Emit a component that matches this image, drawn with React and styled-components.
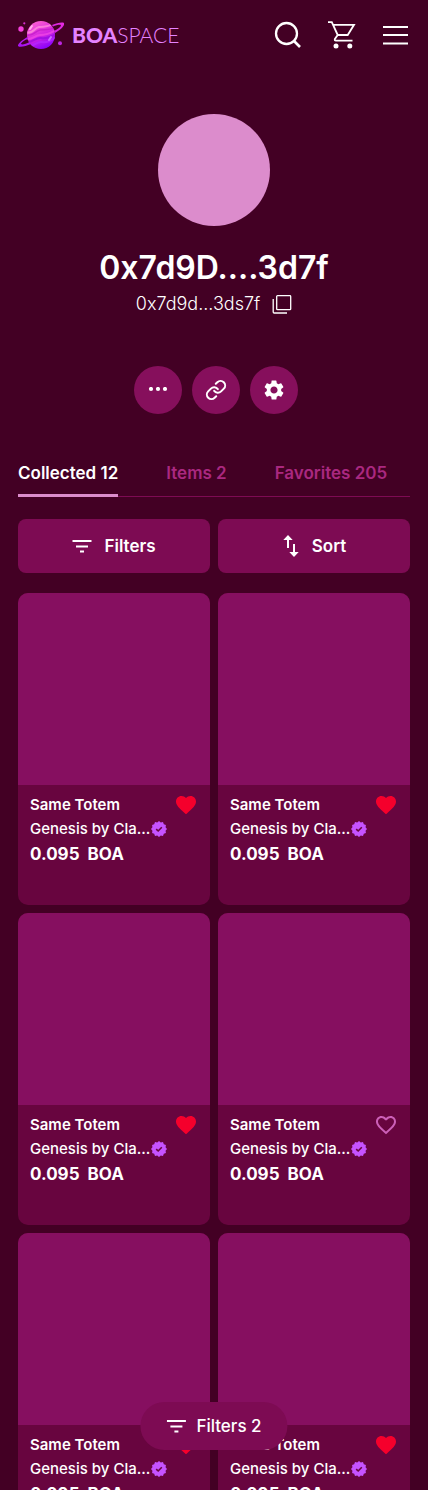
import React, { useState } from "react";
import styled, { createGlobalStyle, css } from "styled-components";
import { MdSettings, MdFavorite, MdFavoriteBorder } from "react-icons/md";

const color = {
  page: "#430024",
  card: "#68053f",
  media: "#860f60",
  round: "#860f5c",
  button: "#7d0b53",
  line: "#7d0b53",
  muted: "#aa2880",
  accent: "#dc8ccc",
  text: "#ffffff",
  like: "#f5002c",
  badge: "#c653ff",
};

const GlobalStyle = createGlobalStyle`
  *, *::before, *::after { box-sizing: border-box; }
  html, body { margin: 0; background: ${color.page}; }
  body {
    color: ${color.text};
    font-family: Inter, "Liberation Sans", sans-serif;
    font-size: 16px;
  }
  svg { display: block; flex: none; }
`;

const buttonReset = css`
  border: 0;
  padding: 0;
  background: none;
  color: inherit;
  font: inherit;
  cursor: pointer;
`;

const Page = styled.div`
  height: 100vh;
  overflow-y: auto;
  scrollbar-width: none;
`;

const Header = styled.header`
  display: flex;
  align-items: center;
  justify-content: space-between;
  height: 70px;
  padding: 0 18px;
`;

const Brand = styled.a`
  display: flex;
  align-items: center;
  gap: 8px;
  color: #e583ff;
  text-decoration: none;
  font-family: Lato, "Liberation Sans", sans-serif;
  font-size: 21px;
  font-weight: 300;
  line-height: 28px;

  b { font-weight: 900; }
`;

const HeaderActions = styled.nav`
  display: flex;
  align-items: center;
  gap: 26px;
`;

const IconButton = styled.button`
  ${buttonReset}
`;

const Profile = styled.section`
  display: flex;
  flex-direction: column;
  align-items: center;
  padding: 44px 18px 0;
`;

const Avatar = styled.div`
  width: 112px;
  height: 112px;
  border-radius: 50%;
  background: ${color.accent};
`;

const Name = styled.h1`
  margin: 20px 0 0;
  font-size: 32px;
  font-weight: 600;
  line-height: 44px;
`;

const Address = styled.div`
  display: flex;
  align-items: center;
  gap: 12px;
  font-size: 18px;
  font-weight: 300;
  line-height: 28px;
`;

const RoundActions = styled.div`
  display: flex;
  gap: 10px;
  margin-top: 48px;
  padding-left: 4px;
`;

const RoundButton = styled.button`
  ${buttonReset}
  display: grid;
  place-items: center;
  width: 48px;
  height: 48px;
  border-radius: 50%;
  background: ${color.round};
`;

const Tabs = styled.div`
  display: flex;
  gap: 48px;
  margin: 44px 18px 0;
  border-bottom: 1px solid ${color.line};
`;

const Tab = styled.button`
  ${buttonReset}
  height: 39px;
  margin-bottom: -1px;
  padding-bottom: 6px;
  border-bottom: 3px solid ${(p) => (p.$active ? color.accent : "transparent")};
  color: ${(p) => (p.$active ? color.text : color.muted)};
  font-size: 17px;
  font-weight: 600;
  line-height: 30px;
  white-space: nowrap;
`;

const Tools = styled.div`
  display: grid;
  grid-template-columns: 1fr 1fr;
  gap: 8px;
  padding: 22px 18px 20px;
`;

const ToolButton = styled.button`
  ${buttonReset}
  display: flex;
  align-items: center;
  justify-content: center;
  gap: 12px;
  height: 54px;
  border-radius: 8px;
  background: ${color.button};
  font-size: 17px;
  font-weight: 600;
`;

const Grid = styled.main`
  display: grid;
  grid-template-columns: 1fr 1fr;
  gap: 8px;
  padding: 0 18px 18px;
`;

const Card = styled.article`
  overflow: hidden;
  border-radius: 10px;
  background: ${color.card};
`;

const Media = styled.div`
  aspect-ratio: 1;
  background: ${color.media};
`;

const CardBody = styled.div`
  min-height: 120px;
  padding: 8px 12px;
`;

const CardTop = styled.div`
  display: flex;
  align-items: center;
  justify-content: space-between;
`;

const CardTitle = styled.h2`
  margin: 0;
  font-size: 15px;
  font-weight: 600;
  line-height: 24px;
`;

const Creator = styled.div`
  display: flex;
  align-items: center;
  gap: 1px;
  font-size: 15px;
  font-weight: 500;
  line-height: 24px;
  white-space: nowrap;
`;

const Price = styled.div`
  display: flex;
  gap: 8px;
  font-size: 17px;
  font-weight: 700;
  line-height: 26px;
`;

const LikeButton = styled.button`
  ${buttonReset}
  color: ${(p) => (p.$liked ? color.like : "#cc60b8")};
`;

const FloatingFilter = styled.button`
  ${buttonReset}
  position: fixed;
  left: 50%;
  bottom: 40px;
  display: flex;
  align-items: center;
  gap: 10px;
  height: 48px;
  padding: 0 26px;
  border-radius: 24px;
  background: ${color.button};
  font-size: 17px;
  font-weight: 500;
  white-space: nowrap;
  transform: translateX(-50%);
`;

function PlanetLogo() {
  return (
    <svg width="46" height="30" viewBox="0 0 46 30" aria-hidden="true">
      <defs>
        <linearGradient id="planet" x1="0.25" y1="0" x2="0.7" y2="1">
          <stop offset="0" stopColor="#ff62d2" />
          <stop offset="0.5" stopColor="#d426e0" />
          <stop offset="1" stopColor="#8300ff" />
        </linearGradient>
        <linearGradient id="ring" x1="1" y1="0" x2="0" y2="1">
          <stop offset="0" stopColor="#e62be0" />
          <stop offset="1" stopColor="#a512f2" />
        </linearGradient>
        <clipPath id="disc"><circle cx="23" cy="15" r="14" /></clipPath>
      </defs>
      <circle cx="23" cy="15" r="14" fill="url(#planet)" />
      <g clipPath="url(#disc)" fill="none" strokeLinecap="round">
        <path d="M8 12C14 15 16 8 21 7s8 1 15-4" stroke="#ff8add" strokeWidth="2" opacity=".8" />
        <path d="M8 15c7 2 9-4 14-5s9 1 16-3" stroke="#c41bcb" strokeWidth="1.5" opacity=".8" />
        <path d="M8 19c7 1 9-4 14-4s9-1 16-5" stroke="#f046e4" strokeWidth="2" opacity=".8" />
        <path d="M9 22c7 0 9-5 14-4s9-1 15-4" stroke="#9c0ce0" strokeWidth="2" opacity=".8" />
        <path d="M12 26c6-1 7-5 12-4s9-1 14-5" stroke="#b426ff" strokeWidth="2" opacity=".8" />
        <path d="M31 20l2-3" stroke="#cf6cff" strokeWidth="2" />
        <path d="M12 9l2-3" stroke="#ffb0e8" strokeWidth="2" />
      </g>
      <path
        d="M34 5c5-2 10-3 12-2 1 3-4 7-9 10l-1-2c4-2 7-4 7-6-2-.5-5 .3-8 1.500zM9.500 17C4 20-.5 24 0 26c2 2 8 0 13-2l-1.500-2C8 24 4 25 3 24c0-1 3-4 7-5z"
        fill="url(#ring)"
      />
      <circle cx="3" cy="9" r="2.700" fill="#f43fdc" />
      <circle cx="6.300" cy="3.300" r="1.100" fill="#d92fd0" />
      <circle cx="42" cy="23.300" r="2" fill="#bb25e0" />
    </svg>
  );
}

function SearchIcon() {
  return (
    <svg width="28" height="28" viewBox="0 0 28 28" fill="none" stroke="currentColor" strokeWidth="2.300">
      <circle cx="12.500" cy="12.500" r="10.500" />
      <path d="M19.500 19.500l6.500 6.500" strokeWidth="2.600" />
    </svg>
  );
}

function CartIcon() {
  return (
    <svg width="28" height="28" viewBox="0 0 28 28" fill="none" stroke="currentColor" strokeWidth="1.800">
      <path d="M0 1.200h3.800L9.700 14h10L26 3.800H5M9.700 14l-2.800 4q-.6 1.600 1 1.600H24.500" />
      <circle cx="8" cy="25" r="2.500" fill="currentColor" stroke="none" />
      <circle cx="21.800" cy="25" r="2.500" fill="currentColor" stroke="none" />
    </svg>
  );
}

function MenuIcon() {
  return (
    <svg width="28" height="28" viewBox="0 0 28 28" stroke="currentColor" strokeWidth="2">
      <path d="M1 6h25M1 14h25M1 22.500h25" />
    </svg>
  );
}

function CopyIcon() {
  return (
    <svg width="20" height="20" viewBox="0 0 20 20" fill="none" stroke="currentColor" strokeWidth="1.300">
      <rect x="4.700" y="1.700" width="14" height="14" rx="0.800" />
      <path d="M1.200 5v13q0 1 1 1H15" />
    </svg>
  );
}

function DotsIcon() {
  return (
    <svg width="20" height="6" viewBox="0 0 20 6" fill="currentColor">
      <circle cx="3" cy="2" r="2.100" />
      <circle cx="10" cy="2" r="2.100" />
      <circle cx="17" cy="2" r="2.100" />
    </svg>
  );
}

function ChainIcon() {
  return (
    <svg width="22" height="22" viewBox="0 0 24 24" fill="none" stroke="currentColor" strokeWidth="2.200" strokeLinecap="round">
      <path d="M10 13a5 5 0 0 0 7.540.540l3-3a5 5 0 0 0-7.070-7.070l-1.720 1.710" />
      <path d="M14 11a5 5 0 0 0-7.540-.540l-3 3a5 5 0 0 0 7.070 7.070l1.710-1.710" />
    </svg>
  );
}

function FilterIcon() {
  return (
    <svg width="20" height="14" viewBox="0 0 20 14" stroke="currentColor" strokeWidth="2.200">
      <path d="M0.500 2h19M4 7.500h12M8 12.500h4" />
    </svg>
  );
}

function SortIcon() {
  return (
    <svg width="18" height="24" viewBox="0 0 18 24" fill="currentColor">
      <path d="M6 1l4.700 5H7v8H5V6H1.300zM12 23l-4.700-5H11v-8h2v8h3.700z" />
    </svg>
  );
}

const lobes = Array.from({ length: 24 }, (_, i) => {
  const radius = i % 2 ? 6.8 : 8;
  const angle = (i * Math.PI) / 12;
  return `${8 + radius * Math.sin(angle)},${8 - radius * Math.cos(angle)}`;
}).join(" ");

function VerifiedIcon() {
  return (
    <svg width="16" height="16" viewBox="0 0 16 16" role="img" aria-label="Verified">
      <polygon points={lobes} fill={color.badge} />
      <path d="M5.200 8.100l2 1.900 3.600-3.700" fill="none" stroke={color.card} strokeWidth="1.600" />
    </svg>
  );
}

const tabs = ["Collected 12", "Items 2", "Favorites 205"];

const items = [true, true, true, false, true, true].map((liked, id) => ({
  id,
  liked,
  title: "Same Totem",
  creator: "Genesis by Cla...",
  amount: "0.095",
  currency: "BOA",
}));

function ItemCard({ item }) {
  const [liked, setLiked] = useState(item.liked);
  return (
    <Card>
      <Media />
      <CardBody>
        <CardTop>
          <CardTitle>{item.title}</CardTitle>
          <LikeButton
            type="button"
            aria-label="Like"
            aria-pressed={liked}
            $liked={liked}
            onClick={() => setLiked(!liked)}
          >
            {liked ? <MdFavorite size={24} /> : <MdFavoriteBorder size={24} />}
          </LikeButton>
        </CardTop>
        <Creator>
          {item.creator}
          <VerifiedIcon />
        </Creator>
        <Price>
          <span>{item.amount}</span>
          <span>{item.currency}</span>
        </Price>
      </CardBody>
    </Card>
  );
}

export default function App() {
  const [active, setActive] = useState(0);
  return (
    <Page>
      <GlobalStyle />
      <Header>
        <Brand href="#">
          <PlanetLogo />
          <span><b>BOA</b>SPACE</span>
        </Brand>
        <HeaderActions>
          <IconButton type="button" aria-label="Search"><SearchIcon /></IconButton>
          <IconButton type="button" aria-label="Cart"><CartIcon /></IconButton>
          <IconButton type="button" aria-label="Menu"><MenuIcon /></IconButton>
        </HeaderActions>
      </Header>
      <Profile>
        <Avatar />
        <Name>0x7d9D....3d7f</Name>
        <Address>
          0x7d9d...3ds7f
          <IconButton type="button" aria-label="Copy address"><CopyIcon /></IconButton>
        </Address>
        <RoundActions>
          <RoundButton type="button" aria-label="More"><DotsIcon /></RoundButton>
          <RoundButton type="button" aria-label="Copy link"><ChainIcon /></RoundButton>
          <RoundButton type="button" aria-label="Settings"><MdSettings size={24} /></RoundButton>
        </RoundActions>
      </Profile>
      <Tabs role="tablist">
        {tabs.map((label, i) => (
          <Tab
            key={label}
            type="button"
            role="tab"
            aria-selected={i === active}
            $active={i === active}
            onClick={() => setActive(i)}
          >
            {label}
          </Tab>
        ))}
      </Tabs>
      <Tools>
        <ToolButton type="button"><FilterIcon />Filters</ToolButton>
        <ToolButton type="button"><SortIcon />Sort</ToolButton>
      </Tools>
      <Grid>
        {items.map((item) => <ItemCard key={item.id} item={item} />)}
      </Grid>
      <FloatingFilter type="button"><FilterIcon />Filters 2</FloatingFilter>
    </Page>
  );
}
